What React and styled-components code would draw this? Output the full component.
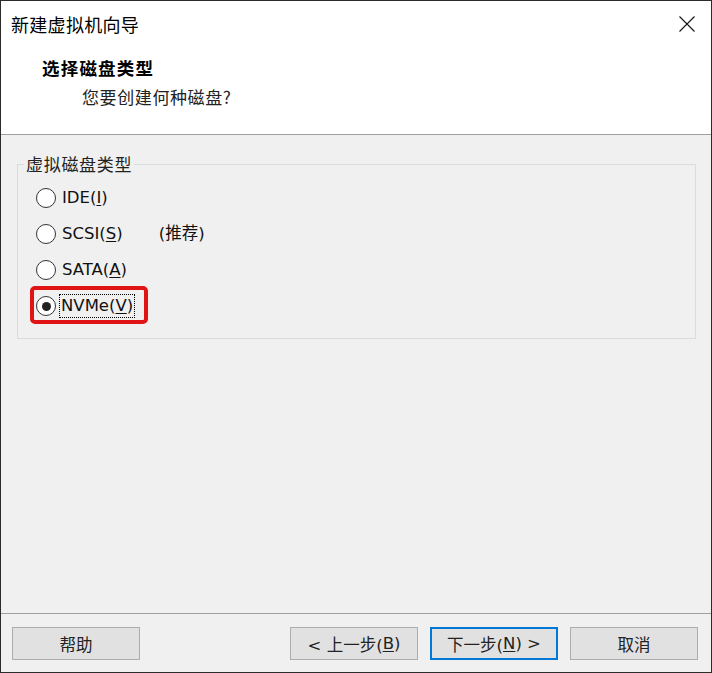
import React from "react";
import styled, { createGlobalStyle } from "styled-components";

const Global = createGlobalStyle`
  html, body { margin: 0; padding: 0; background: #f0f0f0; }
  body { font-family: "DejaVu Sans", "Noto Sans CJK SC", sans-serif; }
  * { box-sizing: border-box; }
`;

const FONT = `"DejaVu Sans", "Noto Sans CJK SC", sans-serif`;
const CJK = `"Noto Sans CJK SC", sans-serif`;

const Window = styled.div`
  width: 712px;
  height: 673px;
  border: 1px solid #2b2b2b;
  display: flex;
  flex-direction: column;
  background: #f0f0f0;
  color: #000;
`;

const TitleBar = styled.div`
  height: 45px;
  background: #fff;
  display: flex;
  align-items: center;
  justify-content: space-between;
  padding: 0 16px 0 10px;
`;

const Title = styled.div`
  font-family: ${CJK};
  font-size: 18px;
  line-height: 22px;
  color: #000;
  letter-spacing: 0.3px;
`;

const CloseBtn = styled.div`
  width: 16px;
  height: 16px;
  display: flex;
  align-items: center;
  justify-content: center;
`;

const Header = styled.div`
  height: 89px;
  background: #fff;
  border-bottom: 1px solid #a0a0a0;
  padding: 10px 0 0 41px;
  display: flex;
  flex-direction: column;
  gap: 5px;
`;

const Heading = styled.div`
  font-family: ${CJK};
  font-weight: 700;
  font-size: 17.5px;
  line-height: 24px;
  letter-spacing: 1.2px;
`;

const SubHeading = styled.div`
  font-family: ${CJK};
  font-size: 17px;
  line-height: 24px;
  padding-left: 40px;
  color: #222;
  letter-spacing: 0.6px;
`;

const Content = styled.div`
  flex: 1;
  padding: 19px 15px 0 16px;
`;

const Group = styled.fieldset`
  margin: 0;
  border: 1px solid #dcdcdc;
  padding: 6px 18px 14px 18px;
  min-width: 0;
`;

const Legend = styled.legend`
  font-family: ${CJK};
  font-size: 17px;
  line-height: 20px;
  color: #222;
  padding: 0 2px;
  margin-left: -12px;
  letter-spacing: 0.7px;
`;

const Row = styled.div`
  height: 36px;
  display: flex;
  align-items: center;
  position: relative;
`;

const Radio = styled.span`
  width: 20px;
  height: 20px;
  border-radius: 50%;
  border: 1px solid #333;
  background: #fff;
  display: inline-flex;
  align-items: center;
  justify-content: center;
  flex: none;
  &::after {
    content: "";
    display: ${(p) => (p.$checked ? "block" : "none")};
    width: 9px;
    height: 9px;
    border-radius: 50%;
    background: #222;
  }
`;

const Label = styled.span`
  font-family: ${FONT};
  font-size: 16.5px;
  line-height: 20px;
  margin-left: ${(p) => (p.$focused ? "4px" : "6px")};
  padding: ${(p) => (p.$focused ? "1px 1px" : "0")};
  outline: ${(p) => (p.$focused ? "1px dotted #000" : "none")};
  color: #111;
  u { text-underline-offset: 2px; }
`;

const Note = styled.span`
  font-family: ${FONT};
  font-size: 16.5px;
  line-height: 20px;
  margin-left: 36px;
  color: #111;
`;

const Highlight = styled.div`
  position: absolute;
  left: -6px;
  top: -2px;
  width: 118px;
  height: 38px;
  border: 4px solid #e01414;
  border-radius: 5px;
  pointer-events: none;
`;

const Footer = styled.div`
  height: 59px;
  border-top: 1px solid #a0a0a0;
  display: flex;
  align-items: flex-start;
  padding: 13px 13px 0 11px;
`;

const Spacer = styled.div`
  flex: 1;
`;

const Button = styled.div`
  width: 128px;
  height: 33px;
  background: #e1e1e1;
  border: ${(p) => (p.$default ? "2px solid #0078d7" : "1px solid #adadad")};
  display: flex;
  align-items: center;
  justify-content: center;
  font-family: ${FONT};
  font-size: 16.5px;
  color: #222;
  margin-left: ${(p) => p.$gap || 0}px;
  u { text-underline-offset: 2px; }
`;

const options = [
  { id: "ide", text: "IDE(", key: "I" },
  { id: "scsi", text: "SCSI(", key: "S", note: "(推荐)" },
  { id: "sata", text: "SATA(", key: "A" },
  { id: "nvme", text: "NVMe(", key: "V", checked: true },
];

export default function App() {
  return (
    <>
      <Global />
      <Window>
        <TitleBar>
          <Title>新建虚拟机向导</Title>
          <CloseBtn>
            <svg width="16" height="16" viewBox="0 0 16 16">
              <path d="M0.5 0.5 L15.5 15.5 M15.5 0.5 L0.5 15.5" stroke="#111" strokeWidth="1.1" fill="none" />
            </svg>
          </CloseBtn>
        </TitleBar>
        <Header>
          <Heading>选择磁盘类型</Heading>
          <SubHeading>您要创建何种磁盘?</SubHeading>
        </Header>
        <Content>
          <Group>
            <Legend>虚拟磁盘类型</Legend>
            {options.map((o) => (
              <Row key={o.id}>
                <Radio $checked={o.checked} />
                <Label $focused={o.checked}>
                  {o.text}
                  <u>{o.key}</u>)
                </Label>
                {o.note && <Note>{o.note}</Note>}
                {o.checked && <Highlight />}
              </Row>
            ))}
          </Group>
        </Content>
        <Footer>
          <Button>帮助</Button>
          <Spacer />
          <Button>
            &lt; 上一步(<u>B</u>)
          </Button>
          <Button $default $gap={12}>
            下一步(<u>N</u>) &gt;
          </Button>
          <Button $gap={12}>取消</Button>
        </Footer>
      </Window>
    </>
  );
}
